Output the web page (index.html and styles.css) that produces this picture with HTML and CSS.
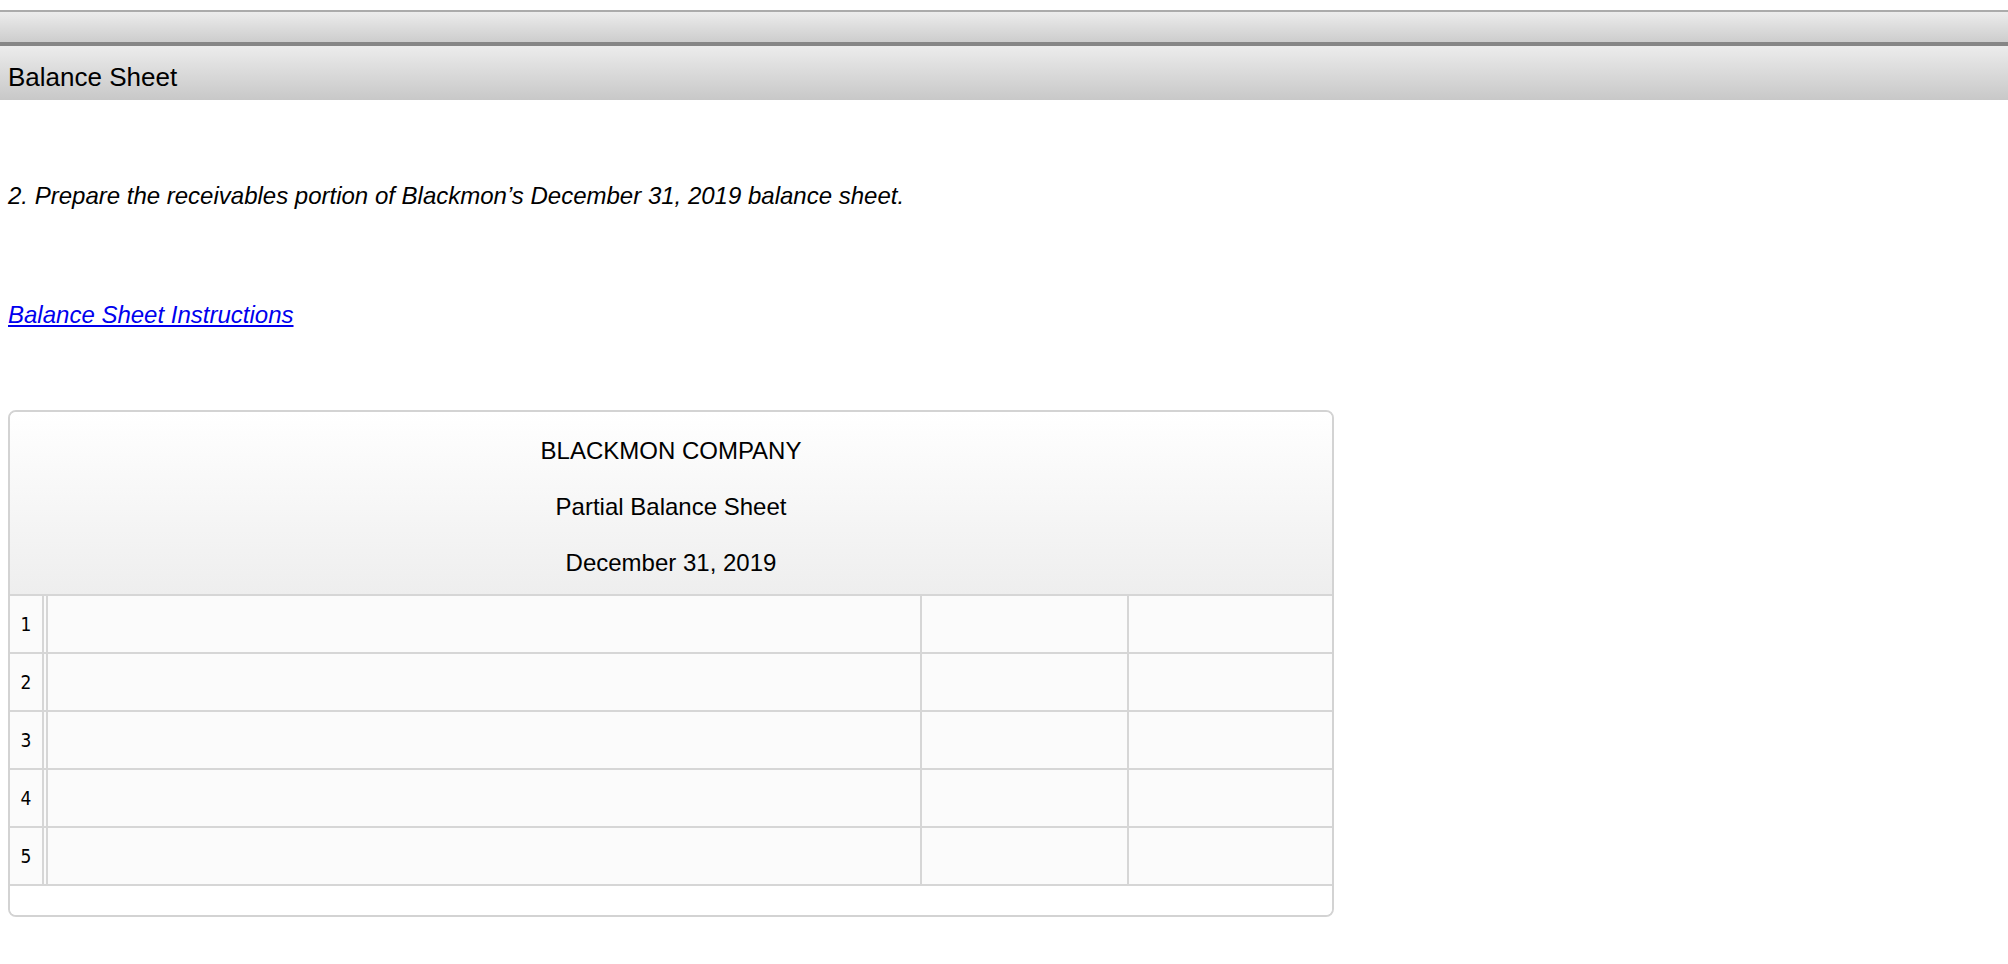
FILE: index.html
```html
<!DOCTYPE html>
<html lang="en">
<head>
<meta charset="utf-8">
<title>Balance Sheet</title>
<link rel="stylesheet" href="styles.css">
</head>
<body>
<div class="topbar"></div>
<div class="section-bar">Balance Sheet</div>
<p class="question">2. Prepare the receivables portion of Blackmon’s December 31, 2019 balance sheet.</p>
<p class="link-line"><a class="instructions" href="#">Balance Sheet Instructions</a></p>
<div class="card">
  <div class="card-head">
    <div class="head-line">BLACKMON COMPANY</div>
    <div class="head-line">Partial Balance Sheet</div>
    <div class="head-line">December 31, 2019</div>
  </div>
  <div class="row"><div class="num">1</div><div class="gap"></div><div class="desc"></div><div class="amt"></div><div class="amt last"></div></div>
  <div class="row"><div class="num">2</div><div class="gap"></div><div class="desc"></div><div class="amt"></div><div class="amt last"></div></div>
  <div class="row"><div class="num">3</div><div class="gap"></div><div class="desc"></div><div class="amt"></div><div class="amt last"></div></div>
  <div class="row"><div class="num">4</div><div class="gap"></div><div class="desc"></div><div class="amt"></div><div class="amt last"></div></div>
  <div class="row"><div class="num">5</div><div class="gap"></div><div class="desc"></div><div class="amt"></div><div class="amt last"></div></div>
  <div class="card-foot"></div>
</div>
</body>
</html>
```
FILE: styles.css
```css
html, body {
  margin: 0;
  padding: 0;
  background: #ffffff;
  font-family: "Liberation Sans", Arial, sans-serif;
  color: #000;
}

.topbar {
  margin-top: 10px;
  height: 30px;
  border-top: 2px solid #ababab;
  border-bottom: 4px solid #868686;
  background: linear-gradient(#ececec, #cdcdcd);
}

.section-bar {
  height: 46px;
  padding-top: 8px;
  padding-left: 8px;
  line-height: 46px;
  font-size: 26px;
  background: linear-gradient(#ececec, #c8c8c8);
}

.question {
  margin: 82px 0 0 8px;
  font-size: 24px;
  line-height: 28px;
  font-style: italic;
}

.link-line {
  margin: 91px 0 0 8px;
  font-size: 24px;
  line-height: 28px;
  font-style: italic;
}

.instructions {
  color: #0000ee;
  text-decoration: underline;
}

.card {
  margin: 81px 0 40px 8px;
  width: 1322px;
  border: 2px solid #d3d3d3;
  border-radius: 8px;
  background: #ffffff;
  overflow: hidden;
}

.card-head {
  padding: 11px 0 3px;
  background: linear-gradient(#ffffff, #eeeeee);
  border-bottom: 2px solid #d6d6d6;
  text-align: center;
}

.head-line {
  height: 56px;
  line-height: 56px;
  font-size: 24px;
}

.row {
  display: flex;
  height: 56px;
  border-bottom: 2px solid #d6d6d6;
  background: #fbfbfb;
}

.num {
  width: 32px;
  border-right: 2px solid #d6d6d6;
  font-family: "DejaVu Sans Condensed", "Liberation Sans Narrow", sans-serif;
  font-size: 19px;
  line-height: 56px;
  text-align: center;
}

.gap {
  width: 2px;
}

.desc {
  width: 872px;
  border-left: 2px solid #d6d6d6;
  border-right: 2px solid #d6d6d6;
}

.amt {
  width: 205px;
  border-right: 2px solid #d6d6d6;
}

.amt.last {
  width: 203px;
  border-right: none;
}

.card-foot {
  height: 29px;
  background: #ffffff;
}
```
